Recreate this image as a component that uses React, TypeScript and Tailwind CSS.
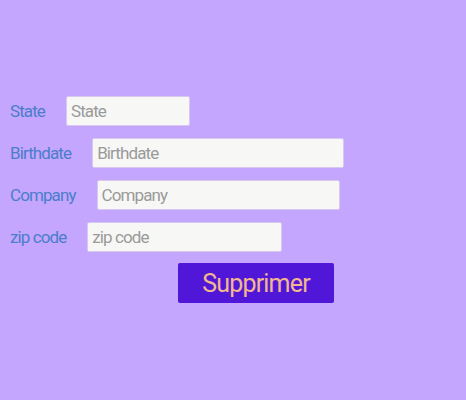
const fields = [
  { label: 'State', width: 'w-[124px]' },
  { label: 'Birthdate', width: 'w-[252px]' },
  { label: 'Company', width: 'w-[243px]' },
  { label: 'zip code', width: 'w-[195px]' },
];

export default function App() {
  return (
    <div className="w-[466px] h-[400px] bg-[#c4a6fe] pt-[96px] pl-[10px] font-['Roboto',sans-serif]">
      <form className="flex flex-col gap-3">
        {fields.map((f) => (
          <div key={f.label} className="flex items-center gap-[21px]">
            <label className="text-[17px] tracking-[-0.9px] text-[#4b7dcb] pt-[1px]">{f.label}</label>
            <input
              placeholder={f.label}
              className={`${f.width} h-[30px] pl-[4px] bg-[#f7f7f5] border border-[#d6c8ee] rounded-[2px] text-[17px] tracking-[-0.9px] placeholder:text-[#9a9a9a] outline-none`}
            />
          </div>
        ))}
        <div className="pl-[168px] -mt-[1px]">
          <button
            type="button"
            className="w-[156px] h-[40px] pt-[2px] bg-[#5117d9] rounded-[2px] text-[#f2b78e] text-[25px] tracking-[-0.8px]"
          >
            Supprimer
          </button>
        </div>
      </form>
    </div>
  );
}
